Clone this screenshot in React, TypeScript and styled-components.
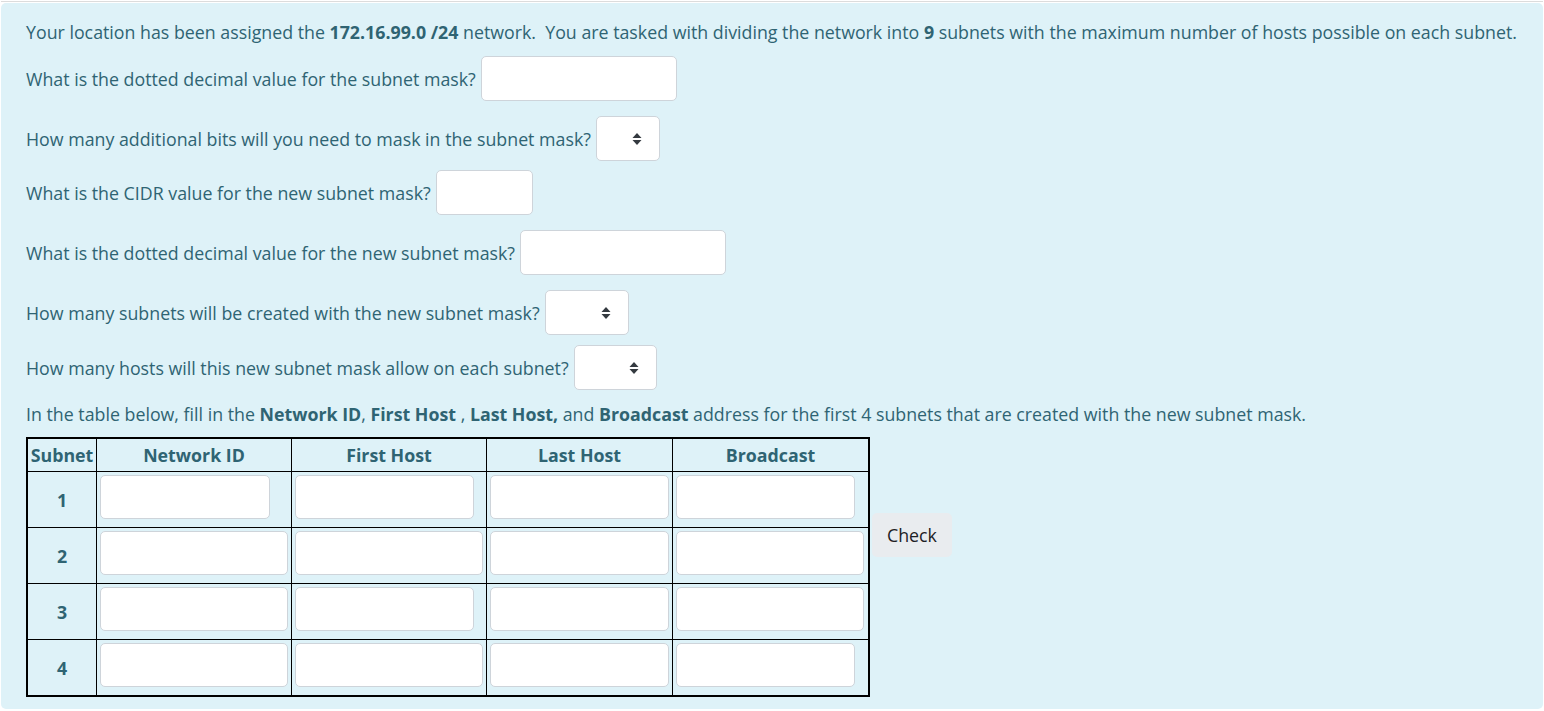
import styled, { createGlobalStyle } from "styled-components";

const GlobalStyle = createGlobalStyle`
  body {
    margin: 0;
    background: #ffffff;
    font-family: "Open Sans", "Noto Sans", sans-serif;
  }
`;

const Page = styled.div`
  padding: 1px 1px 2px 1px;
`;

const Rule = styled.div`
  height: 1px;
  background: #dcdcdc;
  margin-bottom: 1px;
`;

const Panel = styled.div`
  background-color: #def2f8;
  color: #2f6473;
  border-radius: 5px;
  padding: 16px 25px 12px 25px;
  font-size: 17.8px;
  line-height: 26px;
`;

const Intro = styled.div`
  white-space: nowrap;
  margin-bottom: 11px;
`;

const Question = styled.div<{ $after: number }>`
  display: flex;
  align-items: center;
  height: 45px;
  margin-bottom: ${(p) => p.$after}px;
`;

const Label = styled.span`
  margin-right: 5px;
`;

const TextBox = styled.input<{ $w: number }>`
  box-sizing: border-box;
  width: ${(p) => p.$w}px;
  height: 45px;
  border: 1px solid #ced4da;
  border-radius: 5px;
  background: #ffffff;
  outline: none;
  padding: 0 10px;
  font: inherit;
`;

const SelectBox = styled.div<{ $w: number }>`
  box-sizing: border-box;
  position: relative;
  width: ${(p) => p.$w}px;
  height: 45px;
  border: 1px solid #ced4da;
  border-radius: 5px;
  background: #ffffff;
`;

const Arrows = styled.svg`
  position: absolute;
  right: 17px;
  top: 15px;
`;

const Instructions = styled.div`
  margin-bottom: 10px;
`;

const TableRow = styled.div`
  display: flex;
  align-items: flex-start;
`;

const Grid = styled.table`
  border-collapse: collapse;
  border: 2px solid #000000;
`;

const Head = styled.th<{ $w: number }>`
  width: ${(p) => p.$w}px;
  height: 32px;
  padding: 0;
  border: 1px solid #000000;
  font-weight: 700;
  text-align: center;
  vertical-align: middle;
`;

const NumCell = styled.td`
  height: 55px;
  padding: 0;
  border: 1px solid #000000;
  text-align: center;
  font-weight: 700;
  vertical-align: middle;
`;

const Cell = styled.td`
  height: 55px;
  box-sizing: border-box;
  padding: 3px 3px 0;
  border: 1px solid #000000;
  vertical-align: top;
`;

const CellBox = styled(TextBox)`
  display: block;
  height: 44px;
`;

const CheckButton = styled.button`
  margin-top: 76px;
  margin-left: 2px;
  width: 80px;
  height: 44px;
  border: none;
  border-radius: 5px;
  background: #e9ecef;
  color: #1d2125;
  font-family: inherit;
  font-size: 17.8px;
  cursor: pointer;
`;

function Select({ w }: { w: number }) {
  return (
    <SelectBox $w={w}>
      <Arrows width="10" height="14" viewBox="0 0 10 14">
        <path d="M5 1 L9.5 6 H0.5 Z" fill="#343a40" />
        <path d="M5 13 L9.5 8 H0.5 Z" fill="#343a40" />
      </Arrows>
    </SelectBox>
  );
}

const heads = [
  { t: "Subnet", w: 68 },
  { t: "Network ID", w: 194 },
  { t: "First Host", w: 194 },
  { t: "Last Host", w: 185 },
  { t: "Broadcast", w: 195 },
];

const widths = [
  [170, 179, 179, 179],
  [188, 188, 179, 188],
  [188, 179, 179, 188],
  [188, 188, 179, 179],
];

export default function App() {
  return (
    <Page>
      <GlobalStyle />
      <Rule />
      <Panel>
        <Intro>
          Your location has been assigned the <b>172.16.99.0 /24</b> network.&nbsp; You
          are tasked with dividing the network into <b>9</b> subnets with the maximum
          number of hosts possible on each subnet.
        </Intro>
        <Question $after={15}>
          <Label>What is the dotted decimal value for the subnet mask?</Label>
          <TextBox $w={196} />
        </Question>
        <Question $after={9}>
          <Label>How many additional bits will you need to mask in the subnet mask?</Label>
          <Select w={64} />
        </Question>
        <Question $after={15}>
          <Label>What is the CIDR value for the new subnet mask?</Label>
          <TextBox $w={97} />
        </Question>
        <Question $after={15}>
          <Label>What is the dotted decimal value for the new subnet mask?</Label>
          <TextBox $w={206} />
        </Question>
        <Question $after={10}>
          <Label>How many subnets will be created with the new subnet mask?</Label>
          <Select w={84} />
        </Question>
        <Question $after={11}>
          <Label>How many hosts will this new subnet mask allow on each subnet?</Label>
          <Select w={83} />
        </Question>
        <Instructions>
          In the table below, fill in the <b>Network ID</b>, <b>First Host</b> , <b>Last Host,</b>{" "}
          and <b>Broadcast</b> address for the first 4 subnets that are created with the new
          subnet mask.
        </Instructions>
        <TableRow>
          <Grid>
            <thead>
              <tr>
                {heads.map((h) => (
                  <Head key={h.t} $w={h.w}>
                    {h.t}
                  </Head>
                ))}
              </tr>
            </thead>
            <tbody>
              {widths.map((row, i) => (
                <tr key={i}>
                  <NumCell>{i + 1}</NumCell>
                  {row.map((w, j) => (
                    <Cell key={j}>
                      <CellBox $w={w} />
                    </Cell>
                  ))}
                </tr>
              ))}
            </tbody>
          </Grid>
          <CheckButton>Check</CheckButton>
        </TableRow>
      </Panel>
    </Page>
  );
}
